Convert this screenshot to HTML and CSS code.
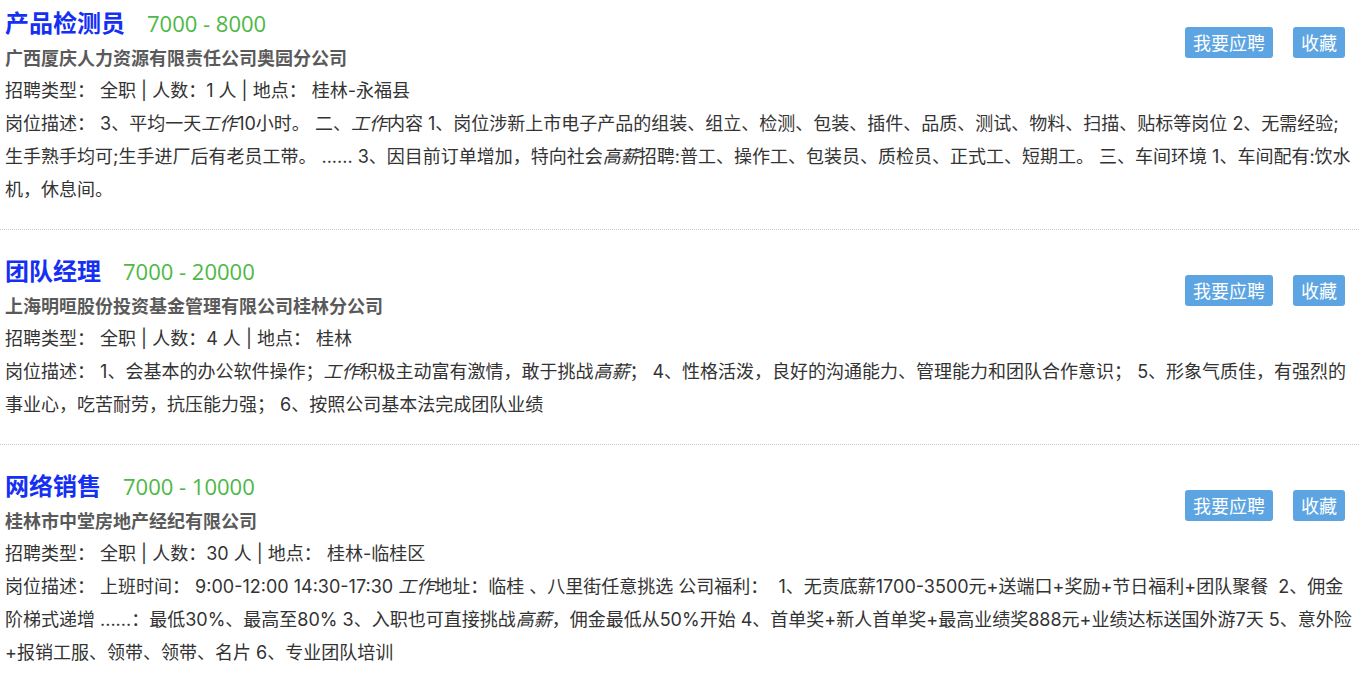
FILE: index.html
```html
<!DOCTYPE html>
<html lang="zh-CN">
<head>
  <meta charset="utf-8">
  <title>招聘信息</title>
  <link rel="stylesheet" href="styles.css">
</head>
<body>
  <ul class="job-list">
    <li class="job-item">
      <div class="job-head">
        <div class="job-main">
          <div class="job-title">
            <a class="job-name" href="#">产品检测员</a>
            <span class="job-salary">7000 - 8000</span>
          </div>
          <div class="job-company">广西厦庆人力资源有限责任公司奥园分公司</div>
        </div>
        <div class="job-actions">
          <a class="btn" href="#">我要应聘</a>
          <a class="btn" href="#">收藏</a>
        </div>
      </div>
      <div class="job-info">招聘类型：&nbsp;全职 | 人数：1 人 | 地点：&nbsp;桂林-永福县</div>
      <div class="job-desc">岗位描述：&nbsp;3、平均一天<em>工作</em>10小时。 二、<em>工作</em>内容 1、岗位涉新上市电子产品的组装、组立、检测、包装、插件、品质、测试、物料、扫描、贴标等岗位 2、无需经验;生手熟手均可;生手进厂后有老员工带。 ...... 3、因目前订单增加，特向社会<em>高薪</em>招聘:普工、操作工、包装员、质检员、正式工、短期工。 三、车间环境 1、车间配有:饮水机，休息间。</div>
    </li>
    <li class="job-item">
      <div class="job-head">
        <div class="job-main">
          <div class="job-title">
            <a class="job-name" href="#">团队经理</a>
            <span class="job-salary">7000 - 20000</span>
          </div>
          <div class="job-company">上海明晅股份投资基金管理有限公司桂林分公司</div>
        </div>
        <div class="job-actions">
          <a class="btn" href="#">我要应聘</a>
          <a class="btn" href="#">收藏</a>
        </div>
      </div>
      <div class="job-info">招聘类型：&nbsp;全职 | 人数：4 人 | 地点：&nbsp;桂林</div>
      <div class="job-desc">岗位描述：&nbsp;1、会基本的办公软件操作；<em>工作</em>积极主动富有激情，敢于挑战<em>高薪</em>；&nbsp;4、性格活泼，良好的沟通能力、管理能力和团队合作意识；&nbsp;5、形象气质佳，有强烈的事业心，吃苦耐劳，抗压能力强；&nbsp;6、按照公司基本法完成团队业绩</div>
    </li>
    <li class="job-item">
      <div class="job-head">
        <div class="job-main">
          <div class="job-title">
            <a class="job-name" href="#">网络销售</a>
            <span class="job-salary">7000 - 10000</span>
          </div>
          <div class="job-company">桂林市中堂房地产经纪有限公司</div>
        </div>
        <div class="job-actions">
          <a class="btn" href="#">我要应聘</a>
          <a class="btn" href="#">收藏</a>
        </div>
      </div>
      <div class="job-info">招聘类型：&nbsp;全职 | 人数：30 人 | 地点：&nbsp;桂林-临桂区</div>
      <div class="job-desc">岗位描述：&nbsp;上班时间：&nbsp;9:00-12:00 14:30-17:30 <em>工作</em>地址：临桂 、八里街任意挑选 公司福利：&nbsp;&nbsp;1、无责底薪1700-3500元+送端口+奖励+节日福利+团队聚餐&nbsp; 2、佣金阶梯式递增 ......：最低30%、最高至80% 3、入职也可直接挑战<em>高薪</em>，佣金最低从50%开始 4、首单奖+新人首单奖+最高业绩奖888元+业绩达标送国外游7天 5、意外险+报销工服、领带、领带、名片 6、专业团队培训</div>
    </li>
  </ul>
</body>
</html>
```

FILE: styles.css
```css
html, body {
  margin: 0;
  padding: 0;
  background: #fff;
  font-family: Inter, "Noto Sans CJK SC", sans-serif;
  font-size: 18px;
  color: #333;
}

.job-list {
  list-style: none;
  margin: 0;
  padding: 0;
}

.job-item {
  padding: 4px 5px 23px;
  border-bottom: 1px dotted #c8c8c8;
  margin-bottom: 18px;
}

.job-head {
  display: flex;
  justify-content: space-between;
  align-items: flex-start;
}

.job-title {
  display: flex;
  align-items: baseline;
  gap: 22px;
  line-height: 36px;
}

.job-name {
  font-family: "Noto Sans CJK SC", sans-serif;
  font-size: 24px;
  font-weight: bold;
  color: #1530f3;
  text-decoration: none;
}

.job-salary {
  font-family: "Open Sans", sans-serif;
  font-size: 22px;
  color: #4db846;
}

.job-company {
  font-family: "Noto Sans CJK SC", sans-serif;
  font-size: 18px;
  font-weight: bold;
  color: #5a5a5a;
  line-height: 33px;
}

.job-actions {
  display: flex;
  gap: 20px;
  margin-top: 23px;
  margin-right: 9px;
}

.btn {
  display: block;
  height: 31px;
  line-height: 31px;
  padding: 0 8px;
  font-family: "Noto Sans CJK SC", sans-serif;
  font-size: 18px;
  color: #fff;
  background: #5ca5e2;
  border-radius: 3px;
  text-decoration: none;
}

.job-info,
.job-desc {
  line-height: 33px;
}

.job-desc em {
  font-style: italic;
}
```
